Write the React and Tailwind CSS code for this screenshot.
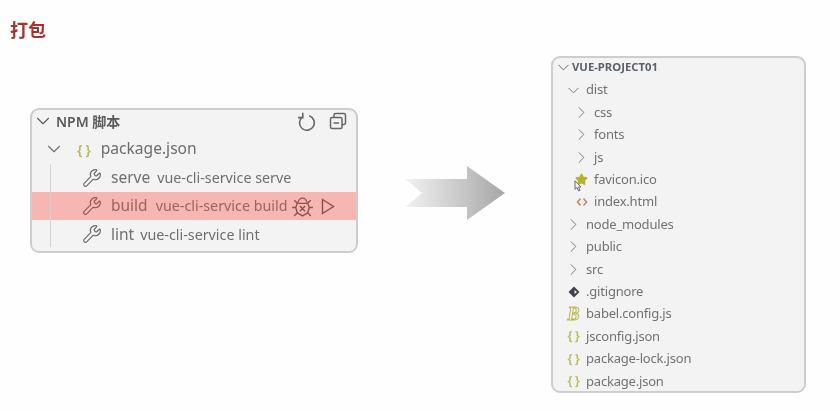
import { ChevronDown, ChevronRight, Star, Wrench } from 'lucide-react';

const FONT = "font-['Noto_Sans','Noto_Sans_CJK_SC',sans-serif]";

const JsonIcon = ({ className = '' }) => (
  <span className={`font-semibold whitespace-pre text-[#b9b857] ${className}`}>{'{ }'}</span>
);

const ScriptRow = ({ name, cmd, active, gap, children }) => (
  <div className={`flex h-[28.4px] items-center pl-[50px] ${active ? 'bg-[#f6b6b1] text-[#a4605e]' : 'text-[#6f6f6f]'}`}>
    <Wrench className={`h-[20px] w-[20px] ${active ? 'text-[#95524f]' : 'text-[#666666]'}`} strokeWidth={1.3} />
    <span className="ml-[9px] text-[15.5px]">{name}</span>
    <span className={`text-[14.3px] ${gap}`}>{cmd}</span>
    {children}
  </div>
);

const BugIcon = () => (
  <svg viewBox="0 0 22 22" className="ml-[4px] h-[23px] w-[23px]" fill="none" stroke="#8f4f4d" strokeWidth="1.3">
    <path d="M7 7a4 4 0 0 1 8 0" />
    <path d="M6 8h10l1.5 4-1.5 5-5 3-5-3-1.5-5z" />
    <path d="M8.5 10.5l5 5M13.5 10.5l-5 5M1 12h3.5M17.5 12H21M3 5l3.5 3M19 5l-3.5 3M3 20l3.5-3.5M19 20l-3.5-3.5" />
  </svg>
);

const PlayIcon = () => (
  <svg viewBox="0 0 14 17" className="ml-[7px] h-[17px] w-[14px]" fill="none" stroke="#8f4f4d" strokeWidth="1.4">
    <path d="M1.5 1.5l11 7-11 7z" />
  </svg>
);

const RefreshIcon = () => (
  <svg viewBox="0 0 18 18" className="ml-auto h-[19px] w-[19px]" fill="none" stroke="#666666" strokeWidth="1.5">
    <path d="M5 4.800A7 7 0 1 0 11.500 3.600" />
    <path d="M5.500 .8v4.500H1" />
  </svg>
);

const CollapseIcon = () => (
  <svg viewBox="0 0 18 18" className="h-[18px] w-[18px]" fill="none" stroke="#666666" strokeWidth="1.5">
    <rect x="1.500" y="5.500" width="11.500" height="11" rx="1.500" />
    <path d="M5 5V3a1.500 1.500 0 0 1 1.500-1.500h8.500A1.500 1.500 0 0 1 16.500 3v8a1.500 1.500 0 0 1-1.500 1.500h-2M4.500 11h5.500" />
  </svg>
);

const NpmPanel = () => (
  <div className="relative mt-[55px] w-[328px] overflow-hidden rounded-[9px] border-2 border-[#cdcdcd] bg-[#f3f3f3] pb-[2px] pt-[1px]">
    <div className="absolute bottom-[4px] left-[18px] top-[54px] w-px bg-[#d2d2d2]" />
    <div className="mb-[3.5px] flex h-[20px] items-center pl-[3px] pr-[9px] text-[#5a5a5a]">
      <ChevronDown className="-ml-[3px] -mr-[2px] h-[22px] w-[22px]" strokeWidth={1.2} />
      <span className="ml-[4px] text-[14px] font-semibold">NPM 脚本</span>
      <RefreshIcon />
      <span className="ml-[13px]"><CollapseIcon /></span>
    </div>
    <div className="flex h-[29px] items-center pl-[14px] text-[#6c6c6c]">
      <ChevronDown className="-ml-[3px] -mr-[2px] h-[22px] w-[22px]" strokeWidth={1.2} />
      <JsonIcon className="ml-[14px] text-[14px] tracking-[-0.3px]" />
      <span className="ml-[10px] text-[15.6px]">package.json</span>
    </div>
    <ScriptRow name="serve" cmd="vue-cli-service serve" gap="ml-[7px]" />
    <ScriptRow name="build" cmd="vue-cli-service build" gap="ml-[8px]" active>
      <BugIcon />
      <PlayIcon />
    </ScriptRow>
    <ScriptRow name="lint" cmd="vue-cli-service lint" gap="ml-[6px]" />
  </div>
);

const Arrow = () => (
  <svg viewBox="0 0 100 54" className="mt-[166px] ml-[47px] h-[54px] w-[100px] shrink-0">
    <defs>
      <linearGradient id="arrowFill" x1="0" x2="1" y1="0" y2="0">
        <stop offset="0" stopColor="#f3f3f3" />
        <stop offset="1" stopColor="#a6a6a6" />
      </linearGradient>
    </defs>
    <polygon points="0,13 62,13 62,0 100,27 62,54 62,41 0,41 17,27" fill="url(#arrowFill)" />
  </svg>
);

const GitIcon = () => (
  <svg viewBox="0 0 12 12" className="h-[12px] w-[12px]">
    <path d="M6 .5L11.500 6 6 11.500.5 6z" fill="#41414d" />
    <path d="M6.500 4L9 6 6.500 8z" fill="#f3f3f3" />
  </svg>
);

const HtmlIcon = () => (
  <svg viewBox="0 0 12 10" className="h-[10px] w-[12px]" fill="none" stroke="#c9825a" strokeWidth="1.5">
    <path d="M4.500 1.500L1.500 5l3 3.500M7.500 1.500l3 3.500-3 3.500" />
  </svg>
);

const Row = ({ indent, chevron, icon, label }) => (
  <div className={`flex h-[22.4px] items-center text-[13px] tracking-[-0.2px] text-[#727272] ${indent}`}>
    {chevron === 'down' && <ChevronDown className="-ml-[3px] mr-[3px] h-[19px] w-[19px] shrink-0" strokeWidth={1.2} />}
    {chevron === 'right' && <ChevronRight className="-ml-[3px] mr-[3px] h-[19px] w-[19px] shrink-0" strokeWidth={1.2} />}
    {icon && <span className="mr-[6px] flex w-[13px] shrink-0 justify-center">{icon}</span>}
    <span>{label}</span>
  </div>
);

const jsonIcon = <JsonIcon className="text-[12.5px] tracking-[-0.4px]" />;
const babelIcon = <span className="font-['Liberation_Serif',serif] text-[18px] font-bold italic leading-none text-transparent [-webkit-text-stroke:1px_#b9b94e]">B</span>;

const ExplorerPanel = () => (
  <div className="relative mt-[56px] ml-[46px] h-[337px] w-[255px] shrink-0 overflow-hidden rounded-[9px] border-2 border-[#cdcdcd] bg-[#f3f3f3]">
    <div className="mb-[3px] flex h-[18px] items-center pl-[3px] text-[#5c6068]">
      <ChevronDown className="-ml-[2px] -mr-[2px] h-[19px] w-[19px]" strokeWidth={1.2} />
      <span className="ml-[1px] text-[11.3px] font-bold">VUE-PROJECT01</span>
    </div>
    <Row indent="pl-[14px]" chevron="down" label="dist" />
    <Row indent="pl-[22px]" chevron="right" label="css" />
    <Row indent="pl-[22px]" chevron="right" label="fonts" />
    <Row indent="pl-[22px]" chevron="right" label="js" />
    <Row indent="pl-[22px]" icon={<Star className="h-[13px] w-[13px] text-[#b3b32e]" fill="currentColor" />} label="favicon.ico" />
    <Row indent="pl-[22px]" icon={<HtmlIcon />} label="index.html" />
    <Row indent="pl-[14px]" chevron="right" label="node_modules" />
    <Row indent="pl-[14px]" chevron="right" label="public" />
    <Row indent="pl-[14px]" chevron="right" label="src" />
    <Row indent="pl-[14px]" icon={<GitIcon />} label=".gitignore" />
    <Row indent="pl-[14px]" icon={babelIcon} label="babel.config.js" />
    <Row indent="pl-[14px]" icon={jsonIcon} label="jsconfig.json" />
    <Row indent="pl-[14px]" icon={jsonIcon} label="package-lock.json" />
    <Row indent="pl-[14px]" icon={jsonIcon} label="package.json" />
    {/* mouse pointer sitting over the favicon row */}
    <svg viewBox="0 0 8 12" className="absolute left-[21px] top-[122px] h-[12px] w-[8px]" fill="#f3f3f3" stroke="#6a6a6a" strokeWidth="1">
      <path d="M1 .8v8.500l2-1.800 1.500 3.500 1.500-.6L4.500 7H7z" />
    </svg>
  </div>
);

export default function App() {
  return (
    <div className={`flex h-[411px] w-[840px] items-start overflow-hidden bg-[#fefefe] ${FONT} blur-[0.4px]`}>
      <div className="ml-[10px] flex flex-col items-start">
        <h1 className="mt-[17px] text-[18px] font-bold leading-[26px] text-[#a5342f]">打包</h1>
        <div className="ml-[20px] mt-[10px]">
          <NpmPanel />
        </div>
      </div>
      <Arrow />
      <ExplorerPanel />
    </div>
  );
}
